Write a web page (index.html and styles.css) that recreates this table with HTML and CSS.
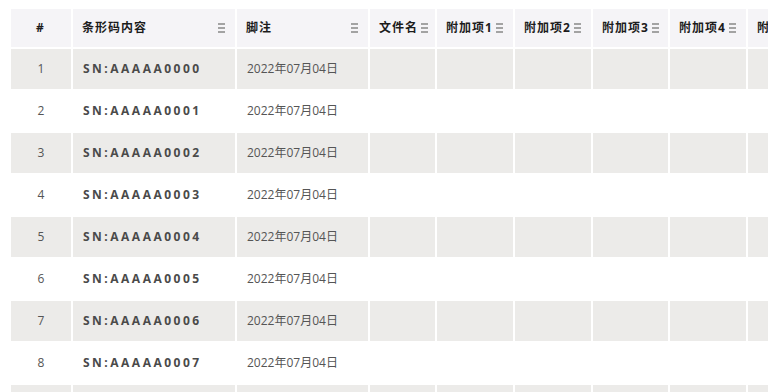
FILE: index.html
```html
<!DOCTYPE html>
<html lang="zh-CN">
<head>
<meta charset="utf-8">
<title>条形码列表</title>
<link rel="stylesheet" href="styles.css">
</head>
<body>
<div class="viewport">
  <div class="grid" role="table">
    <div class="row head" role="row">
      <div class="cell center" role="columnheader">#</div>
      <div class="cell" role="columnheader"><span class="label">条形码内容</span><svg class="menu" viewBox="0 0 7 10" width="7" height="10"><rect y="0" width="7" height="2"/><rect y="4" width="7" height="2"/><rect y="8" width="7" height="2"/></svg></div>
      <div class="cell" role="columnheader"><span class="label">脚注</span><svg class="menu" viewBox="0 0 7 10" width="7" height="10"><rect y="0" width="7" height="2"/><rect y="4" width="7" height="2"/><rect y="8" width="7" height="2"/></svg></div>
      <div class="cell" role="columnheader"><span class="label">文件名</span><svg class="menu" viewBox="0 0 7 10" width="7" height="10"><rect y="0" width="7" height="2"/><rect y="4" width="7" height="2"/><rect y="8" width="7" height="2"/></svg></div>
      <div class="cell" role="columnheader"><span class="label">附加项1</span><svg class="menu" viewBox="0 0 7 10" width="7" height="10"><rect y="0" width="7" height="2"/><rect y="4" width="7" height="2"/><rect y="8" width="7" height="2"/></svg></div>
      <div class="cell" role="columnheader"><span class="label">附加项2</span><svg class="menu" viewBox="0 0 7 10" width="7" height="10"><rect y="0" width="7" height="2"/><rect y="4" width="7" height="2"/><rect y="8" width="7" height="2"/></svg></div>
      <div class="cell" role="columnheader"><span class="label">附加项3</span><svg class="menu" viewBox="0 0 7 10" width="7" height="10"><rect y="0" width="7" height="2"/><rect y="4" width="7" height="2"/><rect y="8" width="7" height="2"/></svg></div>
      <div class="cell" role="columnheader"><span class="label">附加项4</span><svg class="menu" viewBox="0 0 7 10" width="7" height="10"><rect y="0" width="7" height="2"/><rect y="4" width="7" height="2"/><rect y="8" width="7" height="2"/></svg></div>
      <div class="cell" role="columnheader"><span class="label">附加项5</span><svg class="menu" viewBox="0 0 7 10" width="7" height="10"><rect y="0" width="7" height="2"/><rect y="4" width="7" height="2"/><rect y="8" width="7" height="2"/></svg></div>
    </div>
  </div>
</div>
<script src="app.js"></script>
</body>
</html>
```
FILE: styles.css
```css
* { box-sizing: border-box; }
html, body { margin: 0; padding: 0; background: #fff; }
body {
  font-family: "Open Sans", "Noto Sans CJK SC", sans-serif;
  font-size: 12px;
  color: #555;
}
.viewport {
  width: 768px;
  height: 392px;
  overflow: hidden;
  padding: 9px 0 0 11px;
}
.grid {
  display: grid;
  grid-template-columns: 60px 162px 131px 65px 76px 76px 75px 76px 76px;
  grid-template-rows: 38px;
  grid-auto-rows: 40px;
  gap: 2px;
  width: max-content;
}
.row { display: contents; }
.cell {
  display: flex;
  align-items: center;
  justify-content: space-between;
  padding: 0 10px;
  white-space: nowrap;
  overflow: hidden;
  line-height: 1;
}
.cell.center { justify-content: center; }
.head .cell {
  background: #f5f4f7;
  color: #1c1c1c;
  font-weight: 700;
  letter-spacing: 1px;
  padding: 0 10px 0 9px;
}
.label { display: block; }
.menu { fill: #a3a3a3; flex: none; margin-left: 3px; }
.row.shade .cell { background: #ecebe9; }
.row.plain .cell { background: #fff; }
.code {
  font-weight: 700;
  letter-spacing: 2.5px;
  color: #4a4a4a;
  justify-content: flex-start;
}
.date { justify-content: flex-start; color: #555; }
```
FILE: app.js
```js
(function () {
  var grid = document.querySelector('.grid');
  var extraCols = 6;
  for (var i = 0; i < 10; i++) {
    var row = document.createElement('div');
    row.className = 'row ' + (i % 2 === 0 ? 'shade' : 'plain');
    row.setAttribute('role', 'row');
    var n = document.createElement('div');
    n.className = 'cell center';
    n.textContent = String(i + 1);
    row.appendChild(n);
    var code = document.createElement('div');
    code.className = 'cell code';
    code.textContent = 'SN:AAAAA' + ('0000' + i).slice(-4);
    row.appendChild(code);
    var d = document.createElement('div');
    d.className = 'cell date';
    d.textContent = '2022年07月04日';
    row.appendChild(d);
    for (var j = 0; j < extraCols; j++) {
      var c = document.createElement('div');
      c.className = 'cell';
      row.appendChild(c);
    }
    grid.appendChild(row);
  }
})();
```
